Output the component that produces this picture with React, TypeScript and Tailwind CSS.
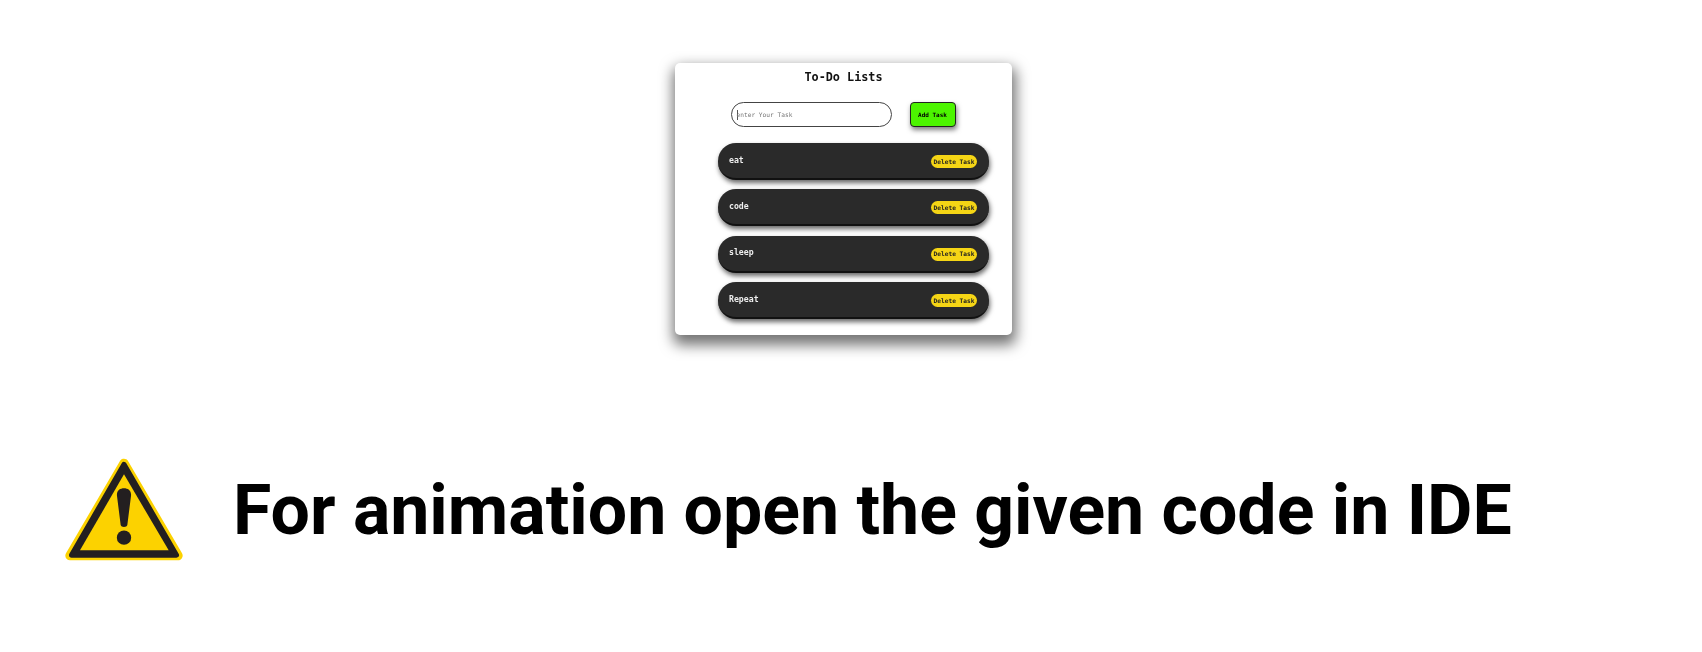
const tasks = ["eat", "code", "sleep", "Repeat"];

function Warning() {
  return (
    <svg width="200" height="140" viewBox="0 0 600 420" className="shrink-0 mt-[2px]">
      <path d="M222 70 L384 347 H60 Z" fill="#fcd200" stroke="#fcd200" strokeWidth="28" strokeLinejoin="round" />
      <path d="M222 74 L379 345 H65 Z" fill="#231f20" stroke="#231f20" strokeWidth="16" strokeLinejoin="round" />
      <path d="M222 103 L356 331 H90 Z" fill="#fcd200" />
      <path d="M201 168 C199 152 210 145 222 145 C234 145 245 152 243 168 L232 255 C231 263 213 263 212 255 Z" fill="#231f20" />
      <circle cx="222" cy="293" r="21.5" fill="#231f20" />
    </svg>
  );
}

export default function App() {
  return (
    <div className="w-[1702px] h-[652px] bg-white overflow-hidden flex flex-col [font-family:'DejaVu_Sans_Mono',monospace]">
      <div className="pt-[63px] pl-[675px] h-[440px] shrink-0">
        <div className="w-[337px] h-[272px] bg-white rounded-[5px] shadow-[1px_7px_14px_3px_rgba(0,0,0,0.55)] flex flex-col items-center">
          <h1 className="text-[11.8px] leading-[16px] font-bold text-[#111] mt-[6px] blur-[0.3px]">To-Do Lists</h1>
          <div className="flex items-center mt-[17px] -ml-[1px] gap-[18px] blur-[0.3px]">
            <div className="w-[161px] h-[25px] border-[1.5px] border-[#444] rounded-full flex items-center pl-[5px] text-[6.2px] text-[#777] bg-white">
              <span className="w-px h-[10px] bg-[#555] -mr-px"></span>enter Your Task
            </div>
            <button className="w-[46px] h-[25px] rounded-[4px] bg-[#4cf500] border border-[#222] text-[6px] font-bold text-black shadow-[1px_3px_5px_rgba(0,0,0,0.5)]">
              Add Task
            </button>
          </div>
          <div className="flex flex-col gap-[9.3px] mt-[16px] ml-[20px]">
            {tasks.map((t) => (
              <div
                key={t}
                className="w-[271px] h-[37px] rounded-[18px] bg-[#2a2a2a] border-b-2 border-[#111] shadow-[1px_3px_5px_rgba(0,0,0,0.6)] flex items-center justify-between pl-[11px] pr-[12px] blur-[0.3px]"
              >
                <span className="text-[8.2px] font-bold text-[#eee] -mt-[1px]">{t}</span>
                <button className="w-[46px] h-[13px] rounded-full bg-[#f5d515] text-[6.2px] font-bold text-[#222] flex items-center justify-center mt-[2px]">
                  Delete Task
                </button>
              </div>
            ))}
          </div>
        </div>
      </div>
      <div className="flex items-center h-[140px] pl-[50px] -mt-[1px]">
        <Warning />
        <span className="ml-[-17px] mt-[3px] text-[69.8px] leading-none font-bold text-black whitespace-nowrap [font-family:'Roboto',sans-serif]">
          For animation open the given code in IDE
        </span>
      </div>
    </div>
  );
}
